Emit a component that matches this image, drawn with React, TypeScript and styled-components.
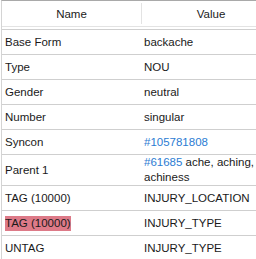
import styled, { createGlobalStyle } from "styled-components";

const GlobalStyle = createGlobalStyle`
  html, body {
    margin: 0;
    padding: 0;
    background: #ffffff;
  }
  body {
    width: 256px;
    height: 259px;
    overflow: hidden;
    font-family: "Liberation Sans", Arial, sans-serif;
    font-size: 11.5px;
    color: #1a1a1a;
  }
`;

type Row = {
  name: string;
  value: React.ReactNode;
  selected?: boolean;
};

const Link = ({ children }: { children: React.ReactNode }) => (
  <Styled.Link>{children}</Styled.Link>
);

const rows: Row[] = [
  { name: "Base Form", value: "backache" },
  { name: "Type", value: "NOU" },
  { name: "Gender", value: "neutral" },
  { name: "Number", value: "singular" },
  { name: "Syncon", value: <Link>#105781808</Link> },
  {
    name: "Parent 1",
    value: (
      <>
        <Link>#61685</Link> ache, aching, achiness
      </>
    ),
  },
  { name: "TAG (10000)", value: "INJURY_LOCATION" },
  { name: "TAG (10000)", value: "INJURY_TYPE", selected: true },
  { name: "UNTAG", value: "INJURY_TYPE" },
];

const App = () => {
  return (
    <>
      <GlobalStyle />
      <Styled.Grid>
        <Styled.Header>
          <Styled.NameHeader>Name</Styled.NameHeader>
          <Styled.HeaderDivider />
          <Styled.ValueHeader>Value</Styled.ValueHeader>
        </Styled.Header>
        <Styled.Body>
          {rows.map((row, i) => (
            <Styled.Row key={i}>
              <Styled.NameCell>
                <Styled.NameText $selected={row.selected}>
                  {row.name}
                </Styled.NameText>
              </Styled.NameCell>
              <Styled.ValueCell>
                <Styled.ValueText>{row.value}</Styled.ValueText>
              </Styled.ValueCell>
            </Styled.Row>
          ))}
        </Styled.Body>
      </Styled.Grid>
    </>
  );
};

const Styled = {
  Grid: styled.div`
    width: 255px;
    height: 259px;
    margin-left: 1px;
    border-top: 1px solid #a9a9a9;
    border-left: 1px solid #d4d4d4;
    box-sizing: border-box;
    overflow: hidden;
  `,

  Header: styled.div`
    display: flex;
    align-items: center;
    height: 25px;
    border-bottom: 1px solid #e3e3e3;
    margin-bottom: 2px;
  `,

  NameHeader: styled.div`
    width: 139px;
    flex: none;
    text-align: center;
    line-height: 15px;
    padding-top: 1px;
  `,

  HeaderDivider: styled.div`
    width: 1px;
    height: 21px;
    background: #e3e3e3;
    flex: none;
  `,

  ValueHeader: styled.div`
    flex: 1;
    text-align: center;
    padding-left: 24px;
    line-height: 15px;
    padding-top: 1px;
  `,

  Body: styled.div`
    border-top: 1px solid #cfcfcf;
  `,

  Row: styled.div`
    display: grid;
    grid-template-columns: 139px 1fr;
    min-height: 24px;
    border-bottom: 1px solid #cfcfcf;
  `,

  NameCell: styled.div`
    display: flex;
    align-items: center;
    padding-left: 3px;
  `,

  NameText: styled.span<{ $selected?: boolean }>`
    line-height: 15px;
    background: ${(p) => (p.$selected ? "#dd7a88" : "transparent")};
  `,

  ValueCell: styled.div`
    display: flex;
    align-items: center;
    padding-left: 3px;
    padding-right: 2px;
    min-width: 0;
  `,

  ValueText: styled.div`
    line-height: 15px;
    white-space: normal;
  `,

  Link: styled.span`
    color: #2b7cd3;
  `,
};

export default App;
